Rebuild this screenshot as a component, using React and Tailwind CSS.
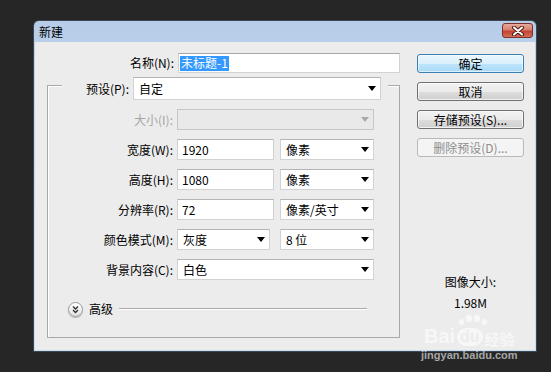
import React from "react";

const Tri = ({ disabled }) => (
  <svg width="8" height="5" viewBox="0 0 8 5" className="shrink-0">
    <polygon points="0,0 8,0 4,5" fill={disabled ? "#a9a9a9" : "#000"} />
  </svg>
);

function Sel({ className, text, disabled }) {
  return (
    <div
      className={
        "h-full flex items-center justify-between pl-[5px] pr-[4px] border " +
        (disabled
          ? "bg-[#e9e9e9] border-[#c6c6c6] "
          : "bg-white border-[#d2d2d2] border-t-[#b4b4b4] ") +
        className
      }
    >
      <span className="leading-none">{text}</span>
      <Tri disabled={disabled} />
    </div>
  );
}

function Inp({ className, text }) {
  return (
    <div
      className={
        "h-full flex items-center pl-[4px] bg-white border border-[#d2d2d2] border-t-[#b4b4b4] " +
        className
      }
    >
      <span className="leading-none">{text}</span>
    </div>
  );
}

function Row({ label, disabled, children }) {
  return (
    <div className="flex items-center h-[21px]">
      <div
        className={
          "w-[125px] text-right leading-none " +
          (disabled ? "text-[#a6a6a6]" : "text-black")
        }
      >
        {label}
      </div>
      <div className="ml-[4px] h-full flex gap-[6px]">{children}</div>
    </div>
  );
}

function Btn({ children, kind }) {
  let cls =
    "h-[19px] w-full rounded-[3px] border flex items-center justify-center leading-none ";
  if (kind === "default")
    cls +=
      "border-[#3c7fb1] bg-[linear-gradient(to_bottom,#eaf6fd_0%,#d9f0fc_50%,#bee6fd_51%,#a7d9f5_100%)] shadow-[inset_0_0_0_1px_rgba(255,255,255,0.6)] text-black";
  else if (kind === "disabled")
    cls += "border-[#b6babd] bg-[#f4f4f4] text-[#8d8d8d]";
  else
    cls +=
      "border-[#707070] bg-[linear-gradient(to_bottom,#f2f2f2_0%,#ebebeb_50%,#dddddd_51%,#cfcfcf_100%)] shadow-[inset_0_0_0_1px_rgba(255,255,255,0.7)] text-black";
  return <div className={cls}>{children}</div>;
}

export default function App() {
  return (
    <div className="relative w-[551px] h-[372px] overflow-hidden bg-[#262626] pt-[20px] pl-[33px] font-['Noto_Sans_CJK_SC',sans-serif] text-[12px] text-black">
      <div className="w-[504px] h-[332px] flex flex-col rounded-t-[6px] border border-[#3a4756] bg-[linear-gradient(to_bottom,#b7cde7_0%,#c3d7ee_30%,#cbdcef_100%)] px-[1px] pb-[1px]">
        {/* title bar */}
        <div className="h-[21px] flex justify-between pl-[4px] pr-[2px]">
          <div className="self-center leading-none pt-[1px]">新建</div>
          <div className="mt-[2px] w-[31px] h-[15px] rounded-[3px] border border-[#7a3129] bg-[linear-gradient(to_bottom,#e9a99c_0%,#d8806f_45%,#c4412f_55%,#d46f58_100%)] flex items-center justify-center">
            <svg width="14" height="10" viewBox="0 0 14 10">
              <path d="M3 1.5 L11 8.5 M11 1.5 L3 8.5" stroke="#4b1810" strokeWidth="4" strokeLinecap="round" />
              <path d="M3 1.5 L11 8.5 M11 1.5 L3 8.5" stroke="#fff" strokeWidth="2" strokeLinecap="round" />
            </svg>
          </div>
        </div>
        {/* content */}
        <div className="flex-1 bg-[#ececec] flex pt-[11px] pl-[12px]">
          {/* left column */}
          <div className="w-[353px] flex flex-col">
            <div className="flex items-center h-[20px]">
              <div className="w-[127px] text-right leading-none">名称(N):</div>
              <div className="ml-[4px] w-[222px] h-full flex items-center pl-[1px] bg-white border border-[#d2d2d2] border-t-[#a8a8a8]">
                <span className="bg-[#3399ff] text-white px-[1px] h-[15px] flex items-center leading-none">
                  未标题-1
                </span>
              </div>
            </div>
            {/* group box */}
            <div className="mt-[12px] h-[253px] border border-[#a9a9a9] shadow-[inset_1px_1px_0_#ffffff] flex flex-col">
              <div className="-mt-[9px] ml-[14px] w-[326px] h-[23px] bg-[#ececec] flex items-center">
                <div className="w-[67px] text-right leading-none">预设(P):</div>
                <div className="ml-[4px] h-full">
                  <Sel className="w-[248px]" text="自定" />
                </div>
              </div>
              <div className="mt-[9px] flex flex-col gap-[9px]">
                <Row label="大小(I):" disabled>
                  <Sel className="w-[197px]" text="" disabled />
                </Row>
                <Row label="宽度(W):">
                  <Inp className="w-[97px]" text="1920" />
                  <Sel className="w-[94px]" text="像素" />
                </Row>
                <Row label="高度(H):">
                  <Inp className="w-[97px]" text="1080" />
                  <Sel className="w-[94px]" text="像素" />
                </Row>
                <Row label="分辨率(R):">
                  <Inp className="w-[97px]" text="72" />
                  <Sel className="w-[94px]" text="像素/英寸" />
                </Row>
                <Row label="颜色模式(M):">
                  <div className="h-full flex gap-[10px]">
                    <Sel className="w-[93px]" text="灰度" />
                    <Sel className="w-[94px]" text="8 位" />
                  </div>
                </Row>
                <Row label="背景内容(C):">
                  <Sel className="w-[197px]" text="白色" />
                </Row>
              </div>
              <div className="mt-[21px] flex items-center h-[16px] pl-[20px]">
                <div className="w-[15px] h-[15px] rounded-full border border-[#9c9c9c] bg-[linear-gradient(to_bottom,#ffffff,#e2e2e2)] shadow-[0_1px_1px_rgba(0,0,0,0.25)] flex items-center justify-center">
                  <svg width="9" height="9" viewBox="0 0 9 9">
                    <polyline points="2,1.5 4.5,4 7,1.5" fill="none" stroke="#333" strokeWidth="1.4" />
                    <polyline points="2,5 4.5,7.5 7,5" fill="none" stroke="#333" strokeWidth="1.4" />
                  </svg>
                </div>
                <div className="ml-[6px] leading-none">高级</div>
                <div className="ml-[6px] mr-[32px] flex-1 h-[2px] border-t border-[#a9a9a9] border-b border-b-white" />
              </div>
            </div>
          </div>
          {/* right column */}
          <div className="ml-[17px] w-[107px] flex flex-col pt-[1px]">
            <div className="flex flex-col gap-[9px]">
              <Btn kind="default">确定</Btn>
              <Btn>取消</Btn>
              <Btn>存储预设(S)...</Btn>
              <Btn kind="disabled">删除预设(D)...</Btn>
            </div>
            <div className="mt-[117px] h-[16px] flex items-center justify-center leading-none">
              图像大小:
            </div>
            <div className="mt-[5px] h-[16px] flex items-center justify-center leading-none">
              1.98M
            </div>
          </div>
        </div>
      </div>
      {/* watermark */}
      <div className="absolute left-[421px] top-[326px] flex flex-col items-center pointer-events-none">
        <div className="flex items-end">
          <span className="font-['Liberation_Sans',sans-serif] font-bold text-[20px] leading-none text-white/60">
            Bai
          </span>
          <div className="relative ml-[2px]">
            <div className="absolute -top-[13px] left-[2px] flex gap-[2px] items-end">
              <div className="w-[5px] h-[6px] rounded-full bg-white/60" />
              <div className="w-[6px] h-[7px] rounded-full bg-white/60 mb-[3px]" />
              <div className="w-[6px] h-[7px] rounded-full bg-white/60 mb-[3px]" />
              <div className="w-[5px] h-[6px] rounded-full bg-white/60" />
            </div>
            <span className="block rounded-[9px] bg-white/60 px-[3px] font-['Liberation_Sans',sans-serif] font-bold text-[16px] leading-[18px] text-[#ececec]">
              du
            </span>
          </div>
          <span className="ml-[2px] font-bold text-[15px] leading-none text-white/60">经验</span>
        </div>
        <div className="mt-[4px] font-['Liberation_Sans',sans-serif] font-bold text-[11px] leading-none text-white/60">
          jingyan.baidu.com
        </div>
      </div>
    </div>
  );
}
